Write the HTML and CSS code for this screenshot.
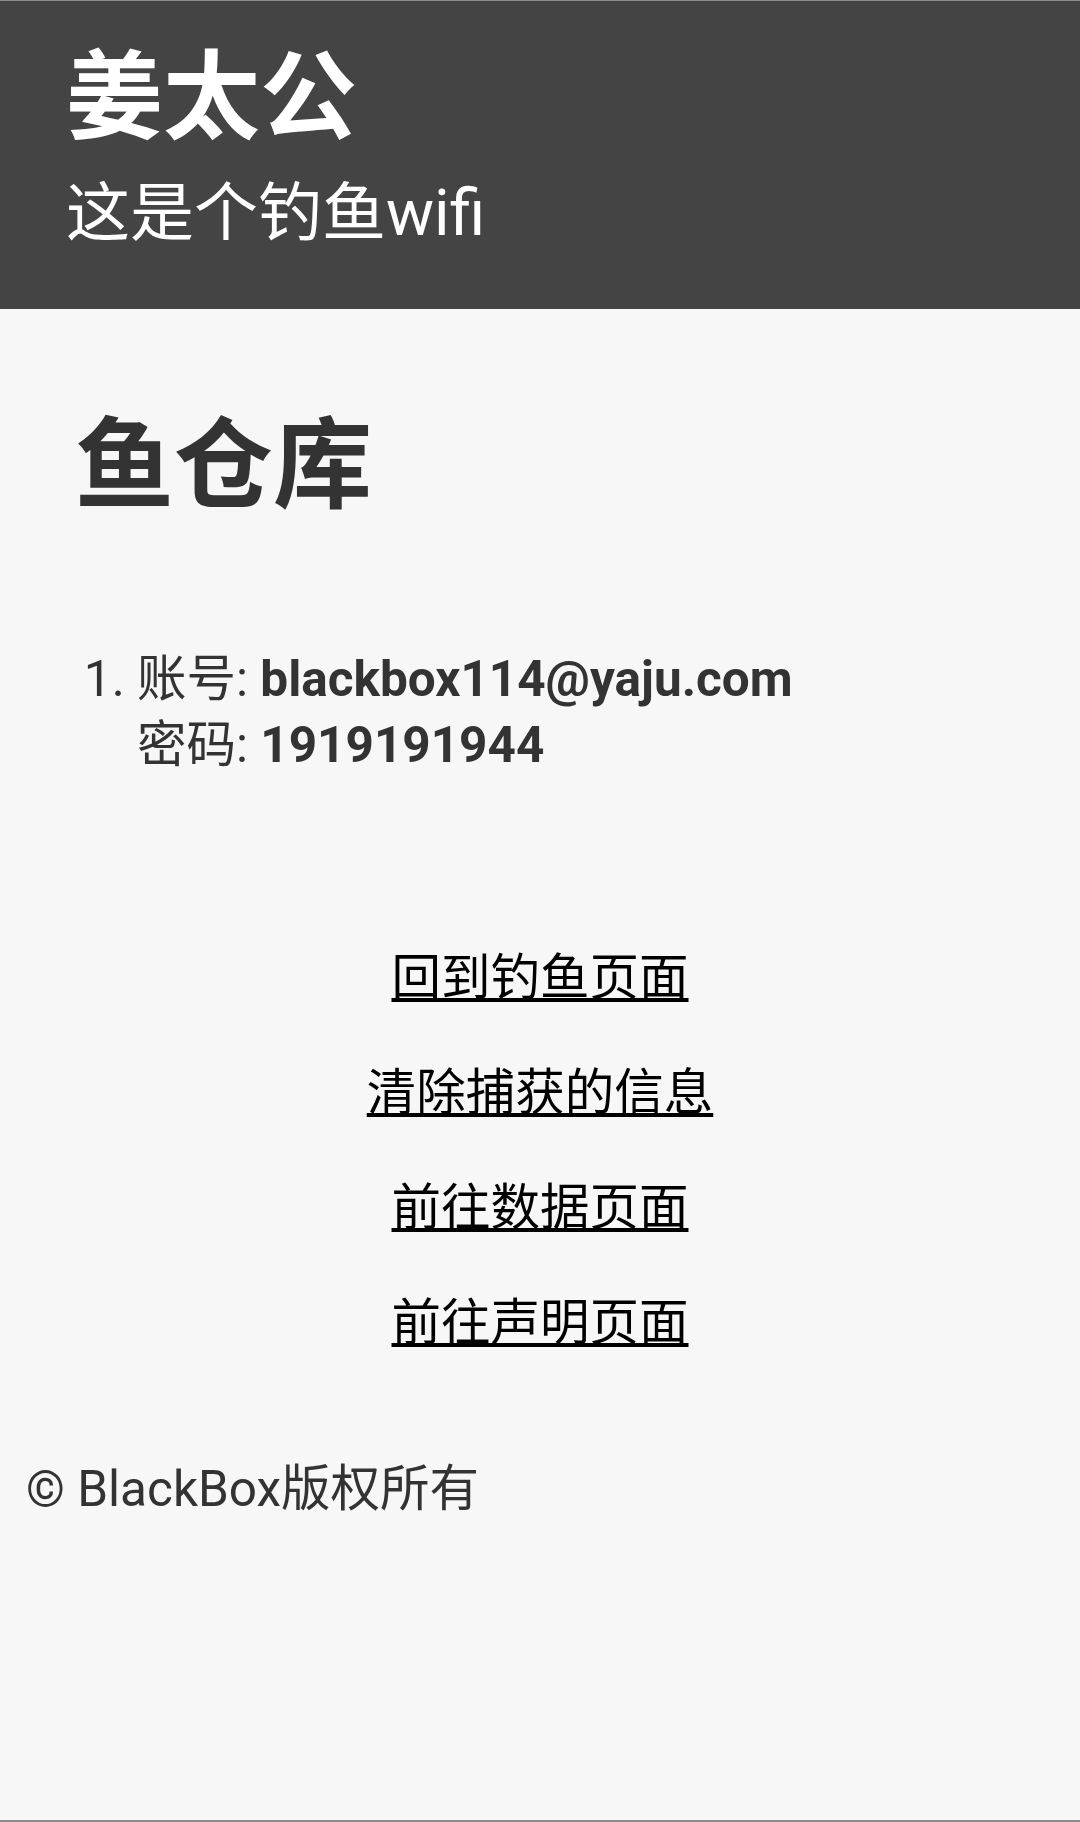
FILE: index.html
```html
<!DOCTYPE html>
<html lang="zh-CN">
<head>
<meta charset="utf-8">
<title>鱼仓库</title>
<link rel="stylesheet" href="styles.css">
</head>
<body>
<header class="site-header">
  <h1 class="site-title">姜太公</h1>
  <p class="site-sub">这是个钓鱼wifi</p>
</header>
<main class="content">
  <h2 class="page-title">鱼仓库</h2>
  <ol class="catch-list">
    <li>账号: <b>blackbox114@yaju.com</b><br>密码: <b>1919191944</b></li>
  </ol>
  <nav class="links">
    <a href="#">回到钓鱼页面</a>
    <a href="#">清除捕获的信息</a>
    <a href="#">前往数据页面</a>
    <a href="#">前往声明页面</a>
  </nav>
</main>
<footer class="site-footer">© BlackBox版权所有</footer>
</body>
</html>
```
FILE: styles.css
```css
html, body {
  margin: 0;
  padding: 0;
}
body {
  background: #f7f7f7;
  color: #333;
  font-family: Roboto, "Noto Sans CJK SC", sans-serif;
  height: 1822px;
  box-sizing: border-box;
  border-top: 1px solid #8a8a8a;
  border-bottom: 2px solid #8a8a8a;
}
.site-header {
  background: #444;
  color: #fff;
  padding: 42px 66px 0;
  height: 308px;
  box-sizing: border-box;
}
.site-title {
  margin: 0;
  font-size: 97px;
  font-weight: 700;
  line-height: 110px;
}
.site-sub {
  margin: 21px 0 0;
  font-size: 64px;
  line-height: 80px;
}
.content {
  padding: 0;
}
.page-title {
  margin: 92px 0 0 75px;
  font-size: 99px;
  font-weight: 700;
  line-height: 130px;
}
.catch-list {
  margin: 115px 0 0;
  padding-left: 137px;
  font-size: 49.5px;
  line-height: 66px;
}
.catch-list b {
  font-weight: 700;
}
.links {
  margin-top: 168px;
  display: flex;
  flex-direction: column;
  align-items: center;
  gap: 50px;
}
.links a {
  color: #000;
  font-size: 49.5px;
  line-height: 65px;
  text-decoration: underline;
}
.site-footer {
  margin-top: 100px;
  padding-left: 26px;
  font-size: 49.5px;
  line-height: 66px;
}
```
